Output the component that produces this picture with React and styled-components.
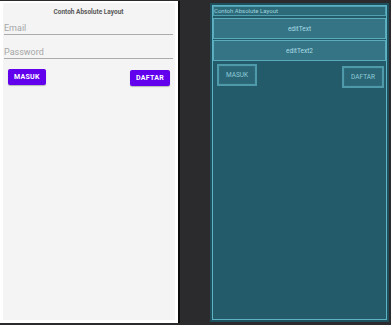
import React from "react";
import styled, { createGlobalStyle } from "styled-components";

const Global = createGlobalStyle`
  body {
    margin: 0;
    background: #2b2b2d;
    font-family: Roboto, "Liberation Sans", sans-serif;
  }
`;

export default function App() {
  return (
    <>
      <Global />
      <Stage>
        <Phone>
          <Screen>
            <Title>Contoh Absolute Layout</Title>
            <Field $top={6}>Email</Field>
            <Field $top={12}>Password</Field>
            <ButtonRow>
              <PurpleButton>MASUK</PurpleButton>
              <PurpleButton $drop>DAFTAR</PurpleButton>
            </ButtonRow>
          </Screen>
        </Phone>

        <Blueprint>
          <BlueInner>
            <BlueTitle>Contoh Absolute Layout</BlueTitle>
            <BlueField>editText</BlueField>
            <BlueField>editText2</BlueField>
            <BlueButtons>
              <BlueButton>MASUK</BlueButton>
              <BlueButton $drop>DAFTAR</BlueButton>
            </BlueButtons>
          </BlueInner>
        </Blueprint>
      </Stage>
    </>
  );
}

const Stage = styled.div`
  width: 391px;
  height: 325px;
  display: flex;
  align-items: flex-start;
  gap: 30px;
  padding-top: 1px;
  box-sizing: border-box;
  overflow: hidden;
`;

const Phone = styled.div`
  width: 180px;
  height: 322px;
  flex-shrink: 0;
  box-sizing: border-box;
  background: #ffffff;
  padding: 2px 3px 3px 3px;
  border-right: 2px solid #0c0c0c;
  display: flex;
`;

const Screen = styled.div`
  flex: 1;
  background: #f4f4f4;
  display: flex;
  flex-direction: column;
  padding: 0 2px 0 1px;
`;

const Title = styled.div`
  text-align: center;
  font-size: 6.5px;
  font-weight: 700;
  color: #5a5a5a;
  margin-top: 4px;
  height: 10px;
  line-height: 10px;
`;

const Field = styled.div`
  font-size: 9px;
  line-height: 10px;
  color: #a6a6a6;
  border-bottom: 1px solid #ababab;
  padding-top: ${(p) => p.$top}px;
  padding-bottom: 1px;
`;

const ButtonRow = styled.div`
  display: flex;
  justify-content: space-between;
  padding: 0 3px 0 4px;
  margin-top: 10px;
`;

const PurpleButton = styled.div`
  background: #6200ee;
  color: #fff;
  font-size: 7px;
  font-weight: 700;
  letter-spacing: 0.3px;
  height: 16px;
  border-radius: 2px;
  display: flex;
  align-items: center;
  justify-content: center;
  padding: 0 6px;
  margin-top: ${(p) => (p.$drop ? "1px" : "0")};
  box-shadow: 0 1px 1px rgba(0, 0, 0, 0.25);
`;

const Blueprint = styled.div`
  width: 179px;
  height: 319px;
  flex-shrink: 0;
  margin-top: 2px;
  box-sizing: border-box;
  background: #1e4f5e;
  padding: 2px;
  display: flex;
`;

const BlueInner = styled.div`
  flex: 1;
  background: #235b6b;
  border: 1px solid #5eb3c3;
  display: flex;
  flex-direction: column;
`;

const BlueTitle = styled.div`
  height: 8px;
  border: 1px solid #4f9fb0;
  background: #2c6a7a;
  color: #9fd3de;
  font-size: 6px;
  line-height: 8px;
  margin-bottom: 1px;
  white-space: nowrap;
`;

const BlueField = styled.div`
  height: 19px;
  border: 1px solid #5aacbc;
  background: #357484;
  color: #aadde7;
  font-size: 6.5px;
  display: flex;
  align-items: center;
  justify-content: center;
  margin-top: 1px;
`;

const BlueButtons = styled.div`
  display: flex;
  justify-content: space-between;
  padding: 3px 2px 0 4px;
`;

const BlueButton = styled.div`
  border: 2px solid #4e9aaa;
  box-shadow: inset 0 0 0 1px #2e6a7a;
  background: #2a6676;
  color: #8fcad6;
  font-size: 6.5px;
  height: 18px;
  display: flex;
  align-items: center;
  justify-content: center;
  padding: 0 7px;
  min-width: 21px;
  margin-top: ${(p) => (p.$drop ? "2px" : "0")};
`;
